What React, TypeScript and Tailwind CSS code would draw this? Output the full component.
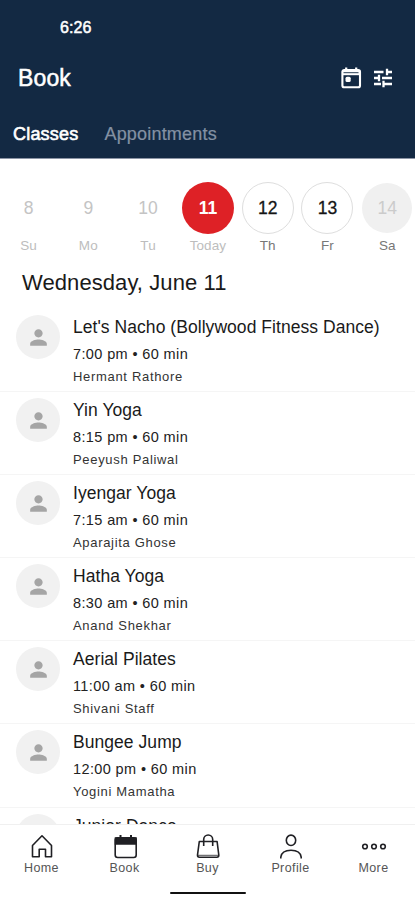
import type { ReactNode } from "react";
import { MdPerson } from "react-icons/md";

const days = [
  { day: "8", label: "Su", state: "past" },
  { day: "9", label: "Mo", state: "past" },
  { day: "10", label: "Tu", state: "past" },
  { day: "11", label: "Today", state: "today" },
  { day: "12", label: "Th", state: "open" },
  { day: "13", label: "Fr", state: "open" },
  { day: "14", label: "Sa", state: "closed" },
];

const circleStyles: Record<string, string> = {
  past: "h-[52px] w-[52px] text-[#c4c4c4]",
  today: "h-[52px] w-[52px] bg-[#de2126] text-white font-bold",
  open: "h-[52px] w-[52px] border border-[#dedede] text-[#151515] [-webkit-text-stroke:0.3px_#151515]",
  closed: "h-[50px] w-[50px] bg-[#f0f0f0] text-[#cbcbcb]",
};

const labelStyles: Record<string, string> = {
  past: "text-[#bdbdbd]",
  today: "text-[#bdbdbd]",
  open: "text-[#777777]",
  closed: "text-[#777777]",
};

const classes = [
  { name: "Let's Nacho (Bollywood Fitness Dance)", time: "7:00 pm • 60 min", teacher: "Hermant Rathore" },
  { name: "Yin Yoga", time: "8:15 pm • 60 min", teacher: "Peeyush Paliwal" },
  { name: "Iyengar Yoga", time: "7:15 am • 60 min", teacher: "Aparajita Ghose" },
  { name: "Hatha Yoga", time: "8:30 am • 60 min", teacher: "Anand Shekhar" },
  { name: "Aerial Pilates", time: "11:00 am • 60 min", teacher: "Shivani Staff" },
  { name: "Bungee Jump", time: "12:00 pm • 60 min", teacher: "Yogini Mamatha" },
  { name: "Junior Dance", time: "", teacher: "" },
];

function CalendarIcon() {
  return (
    <svg width="22" height="24" viewBox="0 0 22 24" fill="none">
      <rect x="2.4" y="4" width="17.6" height="17.2" rx="1.8" stroke="white" strokeWidth="2.1" />
      <path d="M2 4.500h18v4.700H2z" fill="white" />
      <path d="M3.500 6.700h15" stroke="#132943" strokeWidth="0.900" />
      <path d="M6.200 1.500v3M16.200 1.500v3" stroke="white" strokeWidth="2.200" />
      <rect x="5.500" y="10.800" width="5.200" height="5.200" rx="1.500" fill="white" />
    </svg>
  );
}

function TuneIcon() {
  return (
    <svg width="24" height="24" viewBox="0 0 24 24" stroke="white" strokeWidth="2.3">
      <path d="M3 6h9.500M16 6h5M16 2.800v6.400M3 12h4M11 12h10M8 8.800v6.400M3 18h7M13 18h8M12.500 14.800v6.400" />
    </svg>
  );
}

function NavItem({ label, children }: { label: string; children: ReactNode }) {
  return (
    <div className="flex w-[83px] flex-col items-center">
      <svg className="h-7 w-7" viewBox="0 0 28 28" fill="none" stroke="#202024" strokeWidth="1.6">
        {children}
      </svg>
      <span className="-mt-px text-[12.5px] leading-[16px] tracking-[0.4px] text-[#555555]">{label}</span>
    </div>
  );
}

function ClassRow({ name, time, teacher }: { name: string; time: string; teacher: string }) {
  return (
    <div className="flex h-[83.1px] shrink-0 border-b border-[#f5f5f5] pt-[6px] pl-4">
      <div className="flex h-11 w-11 items-center justify-center rounded-full bg-[#f1f1f1]">
        <MdPerson size={25} className="text-[#a5a5a5]" />
      </div>
      <div className="ml-[13px] flex flex-col whitespace-nowrap">
        <span className="text-[17.5px] leading-6 tracking-[0.05px] text-[#1a1a1a]">{name}</span>
        <span className="mt-[5px] text-[14.5px] leading-5 tracking-[0.38px] text-[#222222]">{time}</span>
        <span className="mt-1 text-[13px] leading-[18px] tracking-[0.68px] text-[#333333]">{teacher}</span>
      </div>
    </div>
  );
}

function App() {
  return (
    <div className="flex h-[900px] w-[415px] flex-col overflow-hidden bg-white font-['Liberation_Sans',Arial,sans-serif]">
      {/* Header */}
      <div className="flex h-[159px] shrink-0 flex-col border-b border-[#8c94a5] bg-[#132943] text-white">
        <span className="mt-[18px] ml-[60px] text-[16px] leading-5 tracking-[0.1px] [-webkit-text-stroke:0.5px_white]">
          6:26
        </span>
        <div className="mt-6 flex h-8 items-center justify-between pr-5 pl-[18px]">
          <span className="text-[23px] leading-8 tracking-[0.15px] [-webkit-text-stroke:0.5px_white]">Book</span>
          <div className="flex items-center gap-[9px]">
            <CalendarIcon />
            <TuneIcon />
          </div>
        </div>
        <div className="mt-7 flex gap-[26px] pl-[13px] text-[18px] leading-6 tracking-[0.2px]">
          <span className="[-webkit-text-stroke:0.6px_white]">Classes</span>
          <span className="text-[#8491a3] [-webkit-text-stroke:0.2px_#8491a3]">Appointments</span>
        </div>
      </div>

      {/* Day picker */}
      <div className="flex shrink-0 gap-[7.800px] pt-[23px] pl-[2.500px]">
        {days.map(({ day, label, state }) => (
          <div key={day} className="flex w-[52px] shrink-0 flex-col items-center">
            <div className="flex h-[52px] items-center">
              <div className={`flex items-center justify-center rounded-full text-[17.5px] ${circleStyles[state]}`}>
                {day}
              </div>
            </div>
            <span className={`mt-[3px] text-[13.5px] leading-[18px] tracking-[0.1px] ${labelStyles[state]}`}>
              {label}
            </span>
          </div>
        ))}
      </div>

      <h1 className="mt-[14px] shrink-0 pl-[22px] text-[22px] leading-7 tracking-[0.08px] text-[#1a1a1a]">
        Wednesday, June 11
      </h1>

      {/* Class list */}
      <div className="mt-3 flex min-h-0 flex-1 flex-col overflow-hidden">
        {classes.map((item) => (
          <ClassRow key={item.name} {...item} />
        ))}
      </div>

      {/* Bottom nav */}
      <div className="flex h-[76px] shrink-0 flex-col items-center border-t border-[#f0f0f0]">
        <div className="flex pt-2">
          <NavItem label="Home">
            <path d="M4.500 12.500 14 2.800l9.500 9.700v11.200h-6v-7.400h-6.300v7.400H4.500z" strokeLinejoin="round" />
          </NavItem>
          <NavItem label="Book">
            <rect x="4.200" y="4.700" width="21" height="19.800" rx="2.500" />
            <path d="M4.500 5h20.500v6H4.500z" fill="#202024" />
            <path d="M9.500 2v4M20 2v4" strokeWidth="2" />
          </NavItem>
          <NavItem label="Buy">
            <path d="M5.300 8.500h17.800l1.700 13.500q.2 2.200-2 2.200H5.500q-2.200 0-2-2.200z" strokeLinejoin="round" />
            <path d="M9.700 13V6.500a4.500 4.500 0 0 1 9 0V13" />
            <path d="M4 22.300h20.500" strokeWidth="0.800" />
          </NavItem>
          <NavItem label="Profile">
            <ellipse cx="14" cy="7.300" rx="4.700" ry="5.200" />
            <path d="M3.800 25.500v-1.300C4.500 19 9 17.300 14 17.300s9.500 1.700 10.200 6.900v1.300" />
          </NavItem>
          <NavItem label="More">
            <circle cx="5" cy="13.500" r="2.300" />
            <circle cx="14" cy="13.500" r="2.300" />
            <circle cx="23" cy="13.500" r="2.300" />
          </NavItem>
        </div>
        <div className="mt-4 h-[2px] w-[76px] rounded-full bg-[#111111]" />
      </div>
    </div>
  );
}

export default App;
